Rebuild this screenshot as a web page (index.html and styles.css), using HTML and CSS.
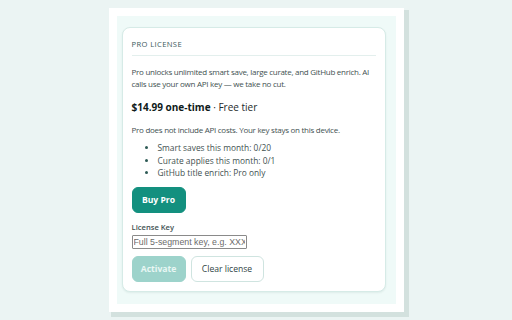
FILE: index.html
```html
<!DOCTYPE html>
<html>
<head>
<meta charset="utf-8">
<link rel="stylesheet" href="styles.css">
</head>
<body>
<div class="panel">
  <div class="popup">
    <section class="card">
      <h2 class="card-title">Pro License</h2>
      <p class="intro">Pro unlocks unlimited smart save, large curate, and GitHub enrich. AI calls use your own API key — we take no cut.</p>
      <p class="price"><strong>$14.99 one-time</strong> · Free tier</p>
      <p class="note">Pro does not include API costs. Your key stays on this device.</p>
      <ul class="usage">
        <li>Smart saves this month: 0/20</li>
        <li>Curate applies this month: 0/1</li>
        <li>GitHub title enrich: Pro only</li>
      </ul>
      <button class="btn btn-primary">Buy Pro</button>
      <label class="field-label" for="key">License Key</label>
      <input id="key" class="key-input" type="text" placeholder="Full 5-segment key, e.g. XXXXX-XXXXX-XXXXX-XXXXX-XXXXX">
      <div class="actions">
        <button class="btn btn-primary btn-disabled">Activate</button>
        <button class="btn btn-outline">Clear license</button>
      </div>
    </section>
  </div>
</div>
</body>
</html>
```
FILE: styles.css
```css
html, body {
  margin: 0;
  padding: 0;
}
body {
  background: #ebf4f3;
  font-family: "Open Sans", "Noto Sans", sans-serif;
  display: flex;
  justify-content: center;
  padding-top: 8px;
  height: 320px;
  box-sizing: border-box;
}
.panel {
  width: 295px;
  height: 304px;
  box-sizing: border-box;
  background: #ffffff;
  padding: 8px;
  box-shadow: 3.5px 3.5px 0 1.5px #d3e1de;
}
.popup {
  background: #effaf8;
  height: 100%;
  box-sizing: border-box;
  padding: 11px 10px 0 5px;
}
.card {
  background: #ffffff;
  border: 1px solid #d6ebe7;
  border-radius: 8px;
  box-shadow: 0 1px 2px rgba(30, 80, 70, 0.08);
  height: 265px;
  box-sizing: border-box;
  padding: 0 9px;
  color: #3f5151;
}
.card-title {
  margin: 0;
  font-size: 7.6px;
  line-height: 10px;
  font-weight: 500;
  letter-spacing: 0.05em;
  text-transform: uppercase;
  color: #3b5a5c;
  padding: 11px 0 6px;
  border-bottom: 1px solid #e3efed;
}
.intro {
  margin: 10px 0 0;
  font-size: 8px;
  letter-spacing: -0.27px;
  line-height: 12px;
}
.price {
  margin: 10px 0 0;
  font-size: 10px;
  line-height: 14px;
  color: #1e2a2a;
}
.price strong {
  font-weight: 700;
  color: #0f1a1a;
}
.note {
  margin: 10px 0 0;
  font-size: 8px;
  letter-spacing: -0.27px;
  line-height: 12px;
}
.usage {
  margin: 6px 0 0;
  padding-left: 26px;
  font-size: 8.4px;
  letter-spacing: 0;
  line-height: 12.5px;
}
.usage li::marker {
  color: #2d5a55;
}
.btn {
  font-family: inherit;
  font-size: 8.6px;
  font-weight: 700;
  height: 26px;
  border-radius: 6px;
  cursor: pointer;
  box-sizing: border-box;
}
.btn-primary {
  display: block;
  margin-top: 7.5px;
  width: 54px;
  background: #13907f;
  color: #ffffff;
  border: 1px solid #13907f;
  padding: 0;
}
.field-label {
  display: block;
  margin-top: 9px;
  font-size: 7.6px;
  line-height: 10px;
  font-weight: 600;
  color: #3f5252;
}
.key-input {
  display: block;
  margin-top: 3px;
  width: 115px;
  height: 14px;
  box-sizing: border-box;
  font-family: "Liberation Sans", Arial, sans-serif;
  font-size: 8.8px;
  padding: 0 1px;
  border: 1px solid #8a8a8a;
  border-radius: 1px;
}
.key-input::placeholder {
  color: #6b6b6b;
}
.actions {
  display: flex;
  gap: 5px;
  margin-top: 7px;
}
.actions .btn-primary {
  margin-top: 0;
}
.btn-disabled {
  background: #9dd3cb;
  border-color: #9dd3cb;
  color: #e9f7f4;
}
.btn-outline {
  width: 73px;
  background: #ffffff;
  border: 1px solid #cfe4e0;
  color: #2f4444;
  font-weight: 500;
}
```
